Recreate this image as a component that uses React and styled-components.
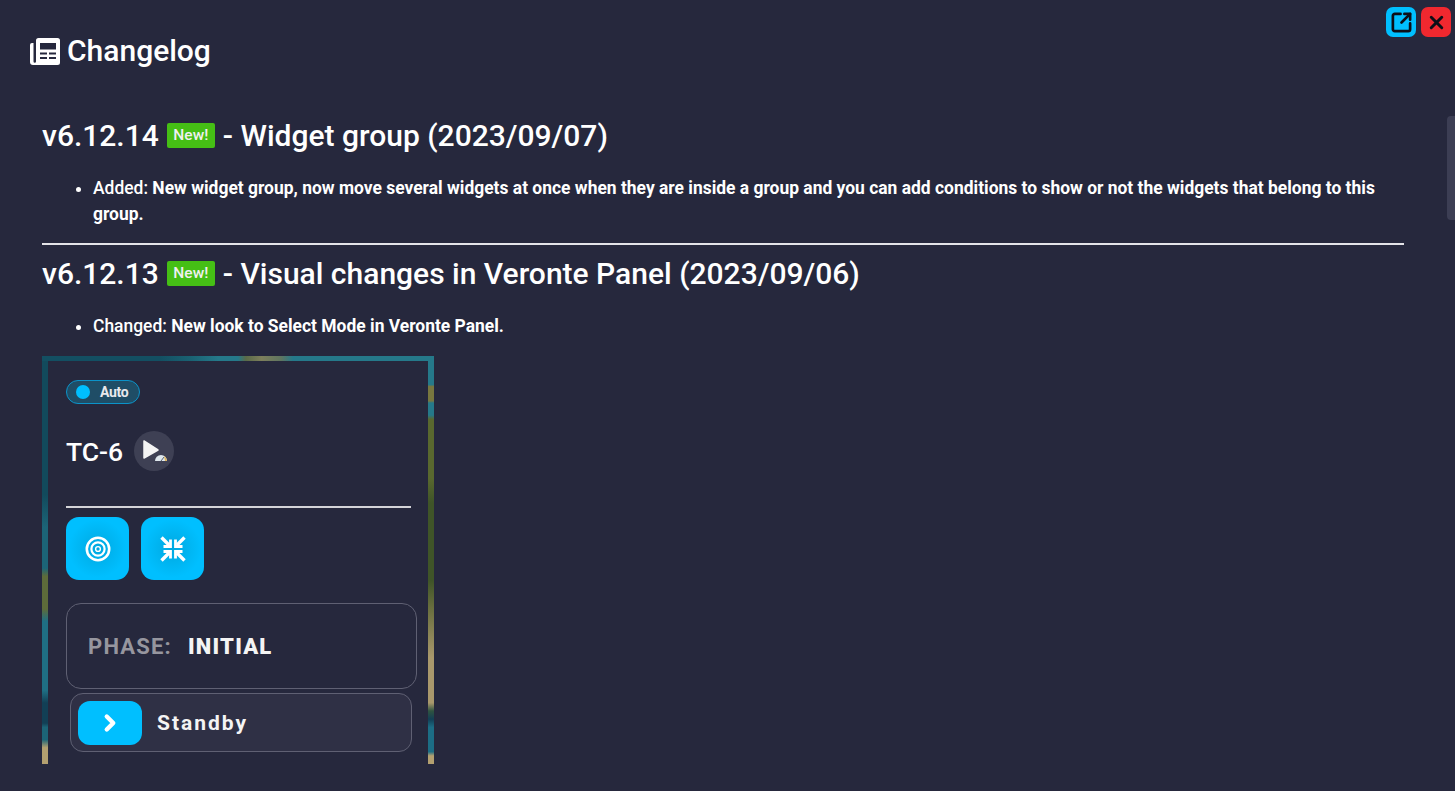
import styled, { createGlobalStyle } from "styled-components";
import { SquareArrowOutUpRight, X, ChevronRight } from "lucide-react";

const GlobalStyle = createGlobalStyle`
  * {
    box-sizing: border-box;
  }
  html, body {
    margin: 0;
    height: 100%;
    overflow: hidden;
    background: #26283d;
  }
  body {
    font-family: Roboto, "Noto Sans", sans-serif;
    color: #fff;
  }
`;

const Page = styled.div`
  position: relative;
  height: 791px;
  padding: 31px 0 27px 30px;
  display: flex;
  flex-direction: column;
  background: #26283d;
`;
const TopActions = styled.div`
  position: absolute;
  top: 7px;
  right: 4px;
  display: flex;
  gap: 5px;
`;
const ActionButton = styled.div`
  width: 30px;
  height: 30px;
  border-radius: 7px;
  background: ${(props) => props.color};
  color: #0d0f18;
  display: flex;
  align-items: center;
  justify-content: center;
`;
const PageTitle = styled.h1`
  margin: 0;
  height: 40px;
  display: flex;
  align-items: center;
  gap: 7px;
  font-size: 30px;
  font-weight: 500;
  line-height: 40px;
`;
const Scroller = styled.div`
  flex: 1;
  min-height: 0;
  overflow: hidden;
  margin-top: 43px;
  padding-left: 12px;
  width: 1374px;
`;
const Thumb = styled.div`
  position: absolute;
  top: 116px;
  right: 0;
  width: 8px;
  height: 104px;
  border-radius: 4px 0 0 4px;
  background: #3c3e54;
`;
const Version = styled.h2`
  margin: 0;
  display: flex;
  align-items: center;
  gap: 8px;
  height: 44px;
  font-size: 30px;
  font-weight: 500;
  line-height: 44px;
`;
const NewBadge = styled.span`
  width: 48px;
  height: 25px;
  margin-top: -2px;
  border-radius: 2px;
  background: #45bf15;
  color: #f0f0f0;
  font-size: 15.5px;
  font-weight: 500;
  line-height: 25px;
  text-align: center;
`;
const Notes = styled.ul`
  margin: 17px 0 16px;
  padding-left: 51px;
  font-size: 17.45px;
  line-height: 26px;
  font-weight: 500;
`;
const Strong = styled.strong`
  font-weight: 700;
`;
const Rule = styled.hr`
  margin: 0 0 7px;
  border: 0;
  height: 2px;
  background: #e4e4e8;
`;
const Shot = styled.div`
  width: 392px;
  margin-top: 17px;
  padding: 5px 6px 0;
  background-color: #26283d;
  background-image:
    linear-gradient(90deg, #134f62 0 30%, #1a6273 38%, #25798a 45% 50%, #5a6a48 52%, #7d7f5c 56%, #5f7560 61%, #25798a 64% 100%),
    linear-gradient(180deg, #124a5c 0 34%, #1c6477 42% 52%, #5d6b3a 54% 62%, #1f6f84 65% 82%, #123f55 85% 90%, #1c6477 91% 94%, #b3a070 96%),
    linear-gradient(180deg, #25798a 0 7%, #78773f 7.5% 11%, #25798a 11.5% 14.5%, #59682f 15.5% 30%, #3f5428 36% 55%, #6a6f3f 62%, #a9986c 74% 85%, #2f5340 87%, #123f55 89%, #1c6d85 91% 97%, #b3a070 98%);
  background-size: 100% 5px, 6px 100%, 6px 100%;
  background-position: top left, top left, top right;
  background-repeat: no-repeat;
`;
const ShotPanel = styled.div`
  height: 403px;
  padding: 19px 11px 0 18px;
  background: #26283d;
`;
const ModeSwitch = styled.div`
  width: 74px;
  height: 24px;
  padding-left: 9px;
  display: flex;
  align-items: center;
  gap: 10px;
  border: 1.5px solid #0b93c9;
  border-radius: 12px;
  background: #1f4d66;
  font-size: 14px;
  font-weight: 700;
  letter-spacing: -0.3px;
  color: #e8e8ec;
`;
const ModeDot = styled.span`
  width: 14px;
  height: 14px;
  border-radius: 50%;
  background: #00bfff;
`;
const NameRow = styled.div`
  margin-top: 27px;
  height: 40px;
  display: flex;
  align-items: center;
  gap: 11px;
  font-size: 26.5px;
  font-weight: 500;
`;
const RoundIcon = styled.div`
  width: 40px;
  height: 40px;
  border-radius: 50%;
  background: #3e4054;
  display: flex;
  align-items: center;
  justify-content: center;
`;
const Divider = styled.div`
  width: 345px;
  height: 2px;
  margin-top: 35px;
  background: #d4d4d8;
`;
const SquareRow = styled.div`
  margin-top: 9px;
  display: flex;
  gap: 12px;
`;
const SquareButton = styled.div`
  width: 63px;
  height: 63px;
  border-radius: 13px;
  background: radial-gradient(circle, #00a8e0 0, #00bfff 65%);
  display: flex;
  align-items: center;
  justify-content: center;
`;
const PhaseBox = styled.div`
  width: 351px;
  height: 86px;
  margin-top: 23px;
  padding-left: 21px;
  display: flex;
  align-items: center;
  gap: 16px;
  border: 1.5px solid #5f6073;
  border-radius: 15px;
  font-size: 22px;
  font-weight: 700;
  letter-spacing: 1.2px;
`;
const PhaseLabel = styled.span`
  color: #96969f;
`;
const PhaseValue = styled.span`
  color: #f4f4f4;
  font-size: 22px;
  font-weight: 900;
`;
const StandbyRow = styled.div`
  width: 342px;
  height: 59px;
  margin: 4px 0 0 4px;
  padding-left: 7px;
  display: flex;
  align-items: center;
  gap: 15px;
  border: 1.5px solid #5f6073;
  border-radius: 13px;
  background: #2f3045;
  font-size: 21px;
  font-weight: 700;
  letter-spacing: 2px;
  color: #f4f4f4;
`;
const StandbyButton = styled.div`
  width: 64px;
  height: 44px;
  border-radius: 12px;
  background: #00bfff;
  display: flex;
  align-items: center;
  justify-content: center;
`;

function NewspaperIcon() {
  return (
    <svg width="30" height="27" viewBox="0 0 30 27">
      <path
        fill="#fff"
        fillRule="evenodd"
        d="M8.5 0 H27.5 A2.5 2.5 0 0 1 30 2.5 V24.5 A2.5 2.5 0 0 1 27.5 27 H3 A3 3 0 0 1 0 24 V7 A2 2 0 0 1 2 5 H3.5 V23.5 A1.2 1.2 0 0 0 6 23.5 V2.5 A2.5 2.5 0 0 1 8.5 0 Z
           M10 5 V11.5 H26 V5 Z
           M10 14.5 V16.5 H17 V14.5 Z
           M19 14.5 V16.5 H26 V14.5 Z
           M10 19 V21 H17 V19 Z
           M19 19 V21 H26 V19 Z"
      />
    </svg>
  );
}

function PlayGaugeIcon() {
  return (
    <svg width="26" height="26" viewBox="0 0 26 26">
      <path d="M3 3 L3 20 L17 12 Z" fill="#f4f4f4" stroke="#f4f4f4" strokeWidth="1.5" strokeLinejoin="round" />
      <path d="M14 23 a6 6 0 0 1 12 0 Z" fill="#dfe8ee" />
      <path d="M20 23 L23 19" stroke="#55606f" strokeWidth="1" />
      <path d="M23 18 a6 6 0 0 1 3 5 h-2 Z" fill="#e0b45a" />
    </svg>
  );
}

function TargetIcon() {
  return (
    <svg width="26" height="26" viewBox="0 0 26 26" fill="none" stroke="#fff">
      <circle cx="13" cy="13" r="11.2" strokeWidth="2.6" />
      <circle cx="13" cy="13" r="6.6" strokeWidth="2.2" />
      <circle cx="13" cy="13" r="2.4" strokeWidth="1.4" />
    </svg>
  );
}

function CollapseIcon() {
  return (
    <svg width="26" height="26" viewBox="0 0 26 26" fill="none" stroke="#fff" strokeWidth="3.4">
      <path d="M1.5 1.5 L9 9" />
      <path d="M24.5 1.5 L17 9" />
      <path d="M1.5 24.5 L9 17" />
      <path d="M24.5 24.5 L17 17" />
      <path d="M3.5 10.5 H10.5 V3.5" strokeWidth="2.8" />
      <path d="M22.5 10.5 H15.5 V3.5" strokeWidth="2.8" />
      <path d="M3.5 15.5 H10.5 V22.5" strokeWidth="2.8" />
      <path d="M22.5 15.5 H15.5 V22.5" strokeWidth="2.8" />
    </svg>
  );
}

export default function App() {
  return (
    <Page>
      <GlobalStyle />
      <TopActions>
        <ActionButton color="#00bfff">
          <SquareArrowOutUpRight size={23} strokeWidth={2.8} />
        </ActionButton>
        <ActionButton color="#f0282f">
          <X size={21} strokeWidth={3.4} />
        </ActionButton>
      </TopActions>
      <Thumb />
      <PageTitle>
        <NewspaperIcon />
        Changelog
      </PageTitle>
      <Scroller>
        <Version>
          v6.12.14 <NewBadge>New!</NewBadge> - Widget group (2023/09/07)
        </Version>
        <Notes>
          <li>
            Added:{" "}
            <Strong>
              New widget group, now move several widgets at once when they are inside a group and you can add
              conditions to show or not the widgets that belong to this group.
            </Strong>
          </li>
        </Notes>
        <Rule />
        <Version>
          v6.12.13 <NewBadge>New!</NewBadge> - Visual changes in Veronte Panel (2023/09/06)
        </Version>
        <Notes>
          <li>
            Changed: <Strong>New look to Select Mode in Veronte Panel.</Strong>
          </li>
        </Notes>
        <Shot>
          <ShotPanel>
            <ModeSwitch>
              <ModeDot />
              Auto
            </ModeSwitch>
            <NameRow>
              TC-6
              <RoundIcon>
                <PlayGaugeIcon />
              </RoundIcon>
            </NameRow>
            <Divider />
            <SquareRow>
              <SquareButton>
                <TargetIcon />
              </SquareButton>
              <SquareButton>
                <CollapseIcon />
              </SquareButton>
            </SquareRow>
            <PhaseBox>
              <PhaseLabel>PHASE:</PhaseLabel>
              <PhaseValue>INITIAL</PhaseValue>
            </PhaseBox>
            <StandbyRow>
              <StandbyButton>
                <ChevronRight size={26} color="#fff" strokeWidth={4} />
              </StandbyButton>
              Standby
            </StandbyRow>
          </ShotPanel>
        </Shot>
      </Scroller>
    </Page>
  );
}
